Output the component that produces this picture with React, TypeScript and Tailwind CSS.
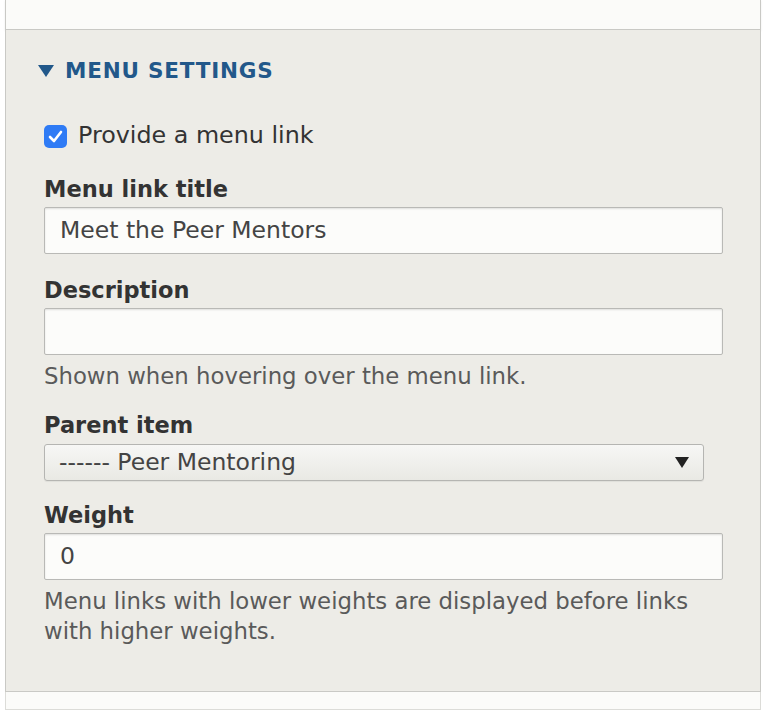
const font = { fontFamily: '"DejaVu Sans", "Liberation Sans", sans-serif' };

function Field({
  label,
  value,
  help,
  className = "",
}: {
  label: string;
  value?: string;
  help?: React.ReactNode;
  className?: string;
}) {
  return (
    <div className={className}>
      <div className="h-[28px] text-[22.5px] font-bold leading-[28px] text-[#333]">{label}</div>
      <div className="mt-[4px] flex h-[47px] w-[679px] items-center rounded-[2px] border border-[#b9b9b6] bg-[#fcfcfa] px-[15px] text-[23.5px] text-[#444] shadow-[inset_0_1px_2px_rgba(0,0,0,0.12)]">
        {value}
      </div>
      {help && <div className="mt-[6px] text-[22.8px] leading-[30px] text-[#5a5a5a]">{help}</div>}
    </div>
  );
}

export default function App() {
  return (
    <div className="h-[721px] w-full overflow-hidden bg-white" style={font}>
      <div className="ml-[5px] w-[756px]">
        <div className="h-[30px] border-x border-b border-[#c9c9c5] bg-[#fbfbf9] shadow-[0_1px_2px_rgba(0,0,0,0.08)]" />
        <div className="border-x border-b border-[#c9c9c5] bg-[#edece7] pb-[45px] pl-[38px] pt-[26px]">
          <div className="flex h-[30px] items-center text-[21.5px] font-bold uppercase tracking-[0.8px] text-[#22588a]">
            <svg width="16" height="12" viewBox="0 0 16 12" className="ml-[-6px] mr-[11px]">
              <polygon points="0,0 16,0 8,12" fill="#22588a" />
            </svg>
            Menu settings
          </div>

          <label className="mt-[35px] flex h-[30px] items-center text-[23.8px] text-[#333]">
            <span className="flex h-[23px] w-[23px] items-center justify-center rounded-[5px] bg-[#2f7bf5]">
              <svg width="15" height="13" viewBox="0 0 15 13">
                <path d="M2 7 L6 11 L13 2" fill="none" stroke="white" strokeWidth="2.6" strokeLinecap="round" strokeLinejoin="round" />
              </svg>
            </span>
            <span className="ml-[11px]">Provide a menu link</span>
          </label>

          <Field className="mt-[24px]" label="Menu link title" value="Meet the Peer Mentors" />
          <Field
            className="mt-[22px]"
            label="Description"
            help="Shown when hovering over the menu link."
          />

          <div className="mt-[20px]">
            <div className="h-[28px] text-[22.5px] font-bold leading-[28px] text-[#333]">Parent item</div>
            <div className="mt-[5px] flex h-[37px] w-[660px] items-center justify-between rounded-[3px] border border-[#b5b5b2] bg-gradient-to-b from-[#f7f7f5] to-[#e9e9e4] pl-[14px] pr-[14px] text-[23.5px] text-[#444] shadow-[0_1px_1px_rgba(0,0,0,0.06)]">
              <span>------ Peer Mentoring</span>
              <svg width="14" height="11" viewBox="0 0 14 11">
                <polygon points="0,0 14,0 7,11" fill="#222" />
              </svg>
            </div>
          </div>

          <Field
            className="mt-[20px]"
            label="Weight"
            value="0"
            help={
              <>
                Menu links with lower weights are displayed before links
                <br />
                with higher weights.
              </>
            }
          />
        </div>
        <div className="h-[18px] border-x border-b border-[#dcdcd8] bg-[#fbfbf9]" />
      </div>
    </div>
  );
}
